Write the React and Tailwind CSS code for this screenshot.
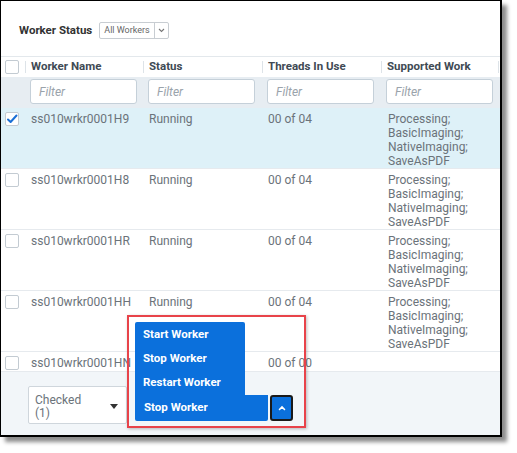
import React from "react";

const rows = [
  { name: "ss010wrkr0001H9", status: "Running", threads: "00 of 04", work: ["Processing;", "BasicImaging;", "NativeImaging;", "SaveAsPDF"], checked: true },
  { name: "ss010wrkr0001H8", status: "Running", threads: "00 of 04", work: ["Processing;", "BasicImaging;", "NativeImaging;", "SaveAsPDF"] },
  { name: "ss010wrkr0001HR", status: "Running", threads: "00 of 04", work: ["Processing;", "BasicImaging;", "NativeImaging;", "SaveAsPDF"] },
  { name: "ss010wrkr0001HH", status: "Running", threads: "00 of 04", work: ["Processing;", "BasicImaging;", "NativeImaging;", "SaveAsPDF"] },
  { name: "ss010wrkr0001HN", status: "", threads: "00 of 00", work: [] },
];

function Checkbox({ checked }) {
  return (
    <div className="w-[14px] h-[14px] bg-white border border-[#c3cbd2] rounded-[2px] flex items-center justify-center">
      {checked && (
        <svg width="12" height="12" viewBox="0 0 12 12">
          <path d="M2 6.5 L4.6 9 L10.5 2.5" fill="none" stroke="#1a6fd6" strokeWidth="2" strokeLinecap="round" strokeLinejoin="round" />
        </svg>
      )}
    </div>
  );
}

function HeaderCell({ children, width, last }) {
  return (
    <div className={`${width} relative flex items-center pl-[6px] text-[11.5px] font-bold text-[#404a54]`}>
      <span className="absolute left-0 top-[4px] bottom-[4px] w-px bg-[#dde3e8]" />
      {last && <span className="absolute right-0 top-[4px] bottom-[4px] w-px bg-[#dde3e8]" />}
      {children}
    </div>
  );
}

function FilterCell({ width }) {
  return (
    <div className={`${width} pl-[5px]`}>
      <div className="w-[107px] h-[25px] bg-white border border-[#c5d0d9] rounded-[3px] flex items-center pl-[8px] text-[12px] italic text-[#9aa3ab]">
        Filter
      </div>
    </div>
  );
}

export default function App() {
  return (
    <div className="w-[517px] h-[453px] bg-white relative" style={{ fontFamily: "Roboto, 'Liberation Sans', sans-serif" }}>
      <div className="w-[502px] h-[437px] bg-white border-l border-t border-r-2 border-b-2 border-black shadow-[5px_5px_4px_rgba(0,0,0,0.45)] flex flex-col overflow-hidden">
        {/* toolbar */}
        <div className="h-[55px] flex items-center pl-[18px] gap-[7px] pt-[4px]">
          <span className="text-[11.5px] font-bold text-[#333]">Worker Status</span>
          <div className="h-[17px] flex items-stretch border border-[#c8cdd2] rounded-[2px] text-[9px] text-[#666]">
            <span className="flex items-center px-[4px]">All Workers</span>
            <span className="w-px bg-[#c8cdd2]" />
            <span className="flex items-center justify-center w-[13px]">
              <svg width="7" height="5" viewBox="0 0 7 5"><path d="M1 1 L3.5 3.5 L6 1" fill="none" stroke="#777" strokeWidth="1.1" /></svg>
            </span>
          </div>
        </div>

        {/* header */}
        <div className="h-[21px] flex border-t border-[#e3e8ec]">
          <div className="w-[24px] flex items-center pl-[4px]"><Checkbox /></div>
          <HeaderCell width="w-[118px]">Worker Name</HeaderCell>
          <HeaderCell width="w-[119px]">Status</HeaderCell>
          <HeaderCell width="w-[119px]">Threads In Use</HeaderCell>
          <HeaderCell width="w-[118px]" last>Supported Work</HeaderCell>
        </div>

        {/* filter row */}
        <div className="flex bg-[#e7edf2] pt-[2px] pb-[4px]">
          <div className="w-[24px]" />
          <FilterCell width="w-[118px]" />
          <FilterCell width="w-[119px]" />
          <FilterCell width="w-[119px]" />
          <FilterCell width="w-[118px]" />
        </div>

        {/* rows */}
        {rows.map((r, i) => (
          <div
            key={i}
            className={`flex text-[12px] leading-[14px] text-[#6b737a] pt-[4px] border-b border-[#e6eaee] ${r.checked ? "bg-[#def1f8]" : "bg-white"} ${i === rows.length - 1 ? "pb-[1px]" : ""}`}
          >
            <div className="w-[24px] pl-[4px] pt-0"><Checkbox checked={r.checked} /></div>
            <div className="w-[118px] pl-[6px]">{r.name}</div>
            <div className="w-[119px] pl-[6px]">{r.status}</div>
            <div className="w-[119px] pl-[6px]">{r.threads}</div>
            <div className="w-[118px] pl-[7px] flex flex-col">
              {r.work.map((w) => (
                <span key={w}>{w}</span>
              ))}
            </div>
          </div>
        ))}

        {/* footer */}
        <div className="flex-1 bg-[#f2f6f9] flex items-start pl-[27px] pt-[14px] gap-[9px]">
          <div className="w-[99px] h-[38px] bg-white border border-[#cfd6dc] rounded-[2px] flex items-center pl-[6px] pr-[8px] pt-[3px] text-[12px] leading-[13px] text-[#6b737a]">
            <div className="flex-1">Checked<br />(1)</div>
            <svg width="8" height="5" viewBox="0 0 8 5"><path d="M0 0 H8 L4 5 Z" fill="#333" /></svg>
          </div>
        </div>
      </div>

      {/* actions menu opened upward */}
      <div className="absolute left-[135px] top-[322px] flex flex-col text-[11.5px] font-bold text-white">
        <div className="w-[110px] bg-[#0b70dc] rounded-t-[2px] flex flex-col pt-[1px]">
          <span className="h-[24px] flex items-center pl-[8px]">Start Worker</span>
          <span className="h-[24px] flex items-center pl-[8px]">Stop Worker</span>
          <span className="h-[24px] flex items-center pl-[8px]">Restart Worker</span>
        </div>
        <div className="flex items-stretch gap-[2px]">
          <div className="w-[133px] h-[26px] bg-[#0b70dc] flex items-center pl-[9px] rounded-b-[2px]">Stop Worker</div>
          <div className="w-[23px] h-[26px] bg-[#0b70dc] border-2 border-[#1a1a1a] rounded-[3px] flex items-center justify-center">
            <svg width="8" height="6" viewBox="0 0 8 6"><path d="M1.5 4.5 L4 2 L6.5 4.5" fill="none" stroke="white" strokeWidth="1.6" strokeLinecap="round" /></svg>
          </div>
        </div>
      </div>

      {/* callout outline */}
      <div className="absolute left-[127px] top-[315px] w-[179px] h-[113px] border-2 border-[#e8434a] shadow-[1px_1px_3px_rgba(0,0,0,0.25)]" />
    </div>
  );
}
